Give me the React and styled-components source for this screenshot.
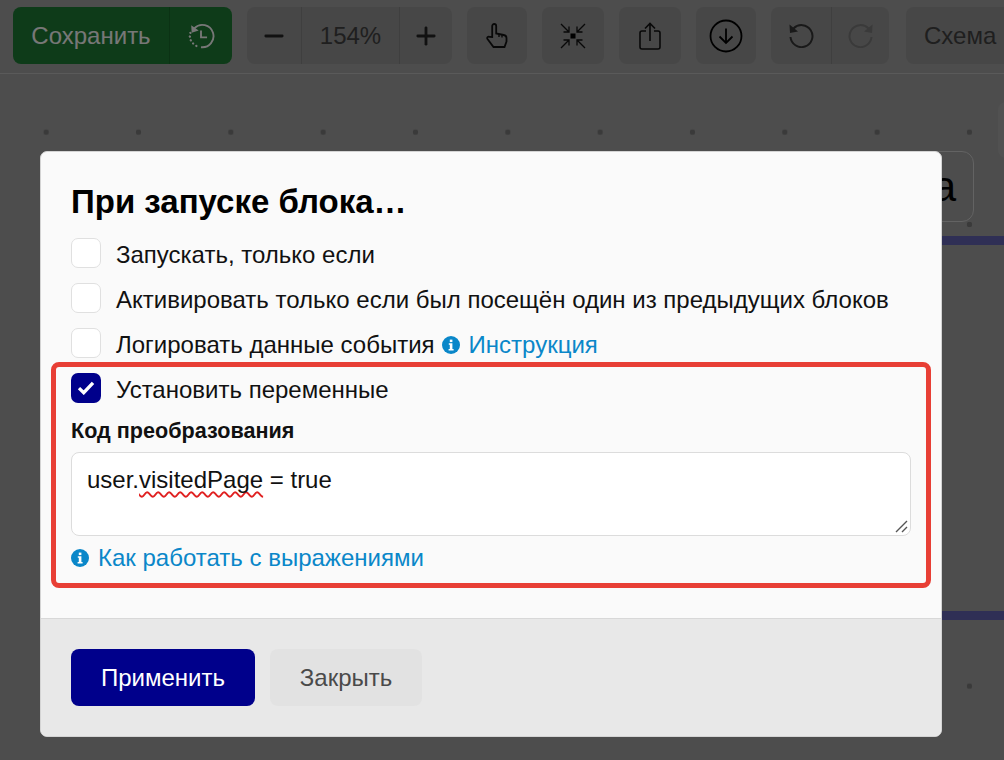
import React from 'react';
import styled, { createGlobalStyle } from 'styled-components';
import { Minus, Plus } from 'lucide-react';

const GlobalStyle = createGlobalStyle`
  html, body {
    margin: 0;
    height: 100%;
    overflow: hidden;
    font-family: "Liberation Sans", Arial, sans-serif;
  }
  * {
    box-sizing: border-box;
  }
`;

const Page = styled.div`
  position: relative;
  display: flex;
  flex-direction: column;
  height: 760px;
  overflow: hidden;
  background: #9a9a9a;
`;

const Toolbar = styled.div`
  display: flex;
  flex: none;
  gap: 15px;
  height: 74px;
  padding: 7px 13px 9px;
  border-bottom: 1px solid #b4b4b4;
`;

const Group = styled.div`
  display: flex;
  flex: none;
  overflow: hidden;
  height: 57px;
  border-radius: 8px;
  background: ${(props) => (props.$save ? '#1c7632' : '#8e8e8e')};
`;

const ToolButton = styled.div`
  display: flex;
  flex: none;
  align-items: center;
  justify-content: center;
  width: ${(props) => props.$width}px;
  font-size: 24px;
  color: ${(props) => (props.$save ? '#efefef' : '#3e3e3e')};
  border-left: ${(props) => (props.$divider ? `1px solid ${props.$save ? '#176429' : '#7e7e7e'}` : 'none')};
`;

const SchemaButton = styled(Group)`
  align-items: center;
  margin-left: 2px;
  padding: 0 18px;
  font-size: 24px;
  color: #3e3e3e;
`;

const Canvas = styled.div`
  position: relative;
  flex: 1;
  background-image: radial-gradient(circle, #747474 2.6px, transparent 3px);
  background-size: 92.33px 92.33px;
  background-position: 0 12px;
`;

const Card = styled.div`
  position: absolute;
  top: 77px;
  right: 30px;
  display: flex;
  align-items: center;
  justify-content: flex-end;
  width: 240px;
  height: 71px;
  padding-right: 17px;
  font-size: 42px;
  color: #000;
  background: #9a9a9a;
  border: 1px solid #c6c6c6;
  border-radius: 12px;
`;

const Block = styled.div`
  position: absolute;
  top: 162px;
  left: 600px;
  right: 0;
  height: 384px;
  background: #9a9a9a;
  border-top: 9px solid #5e5eaa;
  border-bottom: 9px solid #5e5eaa;
`;

const SideTab = styled.div`
  position: absolute;
  top: 28px;
  left: 998px;
  width: 40px;
  height: 56px;
  background: #a2a2a2;
  border-radius: 8px;
`;

const Overlay = styled.div`
  position: absolute;
  inset: 0;
  display: flex;
  align-items: flex-start;
  padding: 151px 62px 0 40px;
  background: rgba(0, 0, 0, 0.5);
`;

const Modal = styled.div`
  width: 902px;
  overflow: hidden;
  background: #fafafa;
  border: 1px solid #d4d4d4;
  border-radius: 7px;
`;

const ModalBody = styled.div`
  display: flex;
  flex-direction: column;
  padding: 31px 30px 30px;
`;

const Title = styled.h2`
  margin: 0 0 17px;
  font-size: 33px;
  line-height: 38px;
  font-weight: 700;
  color: #000;
`;

const Options = styled.div`
  display: flex;
  flex-direction: column;
  gap: 15px;
`;

const Option = styled.div`
  display: flex;
  align-items: center;
  gap: 15px;
  height: 30px;
  font-size: 24px;
  color: #111;
`;

const OptionText = styled.span`
  display: flex;
  align-items: center;
  padding-top: 3px;
`;

const Check = styled.span`
  display: flex;
  flex: none;
  align-items: center;
  justify-content: center;
  width: 30px;
  height: 30px;
  background: ${(props) => (props.$checked ? '#00008b' : '#fff')};
  border: ${(props) => (props.$checked ? 'none' : '1px solid #e0e0e0')};
  border-radius: 7px;
`;

const InlineLink = styled.a`
  display: inline-flex;
  align-items: center;
  gap: 9px;
  margin-left: ${(props) => props.$indent || 0}px;
  font-size: 24px;
  line-height: 24px;
  color: #0a87c9;
`;

const Highlight = styled.div`
  display: flex;
  flex-direction: column;
  margin: 4px -20px 0;
  padding: 6px 15px 13px;
  border: 5px solid #e83f35;
  border-radius: 8px;
`;

const FieldLabel = styled.div`
  margin: 16px 0 9px;
  font-size: 21.6px;
  line-height: 24px;
  font-weight: 700;
  color: #111;
`;

const CodeField = styled.div`
  position: relative;
  height: 84px;
  margin-bottom: 10px;
  padding: 13px 15px;
  font-size: 24px;
  line-height: 28px;
  color: #111;
  background: #fff;
  border: 1px solid #dcdcdc;
  border-radius: 8px;
`;

const Misspelled = styled.span`
  text-decoration: underline wavy #e02020 1.5px;
  text-decoration-skip-ink: none;
  text-underline-offset: 3px;
`;

const Grip = styled.svg`
  position: absolute;
  right: 2px;
  bottom: 2px;
`;

const Footer = styled.div`
  display: flex;
  gap: 15px;
  padding: 30px;
  background: #e8e8e8;
  border-top: 1px solid #d8d8d8;
`;

const Button = styled.div`
  display: flex;
  align-items: center;
  justify-content: center;
  width: ${(props) => props.$width}px;
  height: 57px;
  font-size: 24px;
  color: ${(props) => (props.$primary ? '#fff' : '#4a4a4a')};
  background: ${(props) => (props.$primary ? '#00008b' : '#e2e2e2')};
  border-radius: 8px;
`;

function HistoryIcon() {
  return (
    <svg width="28" height="28" viewBox="0 0 30 30" fill="none" stroke="#efefef" strokeWidth="2">
      <path d="M8 6.5A12 12 0 1 1 15 27" />
      <path d="M3.6 11.6l.1.1M3 15.6l.1.1M4 19.6l.1.1M6.5 23l.1.1M10 25.6l.1.1" strokeWidth="2.4" strokeLinecap="round" />
      <path d="M4.5 3.5L5 11.5L12.5 9Z" fill="#efefef" stroke="none" />
      <path d="M15 9v7.5h6.5" />
    </svg>
  );
}

function HandIcon() {
  return (
    <svg width="22" height="26" viewBox="0 0 22 26" fill="none" stroke="#111" strokeWidth="1.8">
      <path d="M6.2 14V3a2 2 0 0 1 4 0v7.5l7.5 1.5c1.5.3 2.8 1.2 2.8 3v3.5l-2 5.5H7.5L1.5 16c-.9-1.3.6-3 2-2.2Z" />
      <path d="M13 11v3M16 11.5v3" strokeWidth="1.4" />
    </svg>
  );
}

function FitIcon() {
  return (
    <svg width="26" height="26" viewBox="0 0 26 26" fill="none" stroke="#111" strokeWidth="1.3">
      <rect x="10.5" y="10.5" width="5" height="5" fill="#000" stroke="none" />
      <path d="M1 1l8 8M3.5 9H9V3.5" />
      <path d="M25 1l-8 8M22.5 9H17V3.5" />
      <path d="M1 25l8-8M3.5 17H9v5.5" />
      <path d="M25 25l-8-8M22.5 17H17v5.5" />
    </svg>
  );
}

function ShareIcon() {
  return (
    <svg width="22" height="28" viewBox="0 0 22 28" fill="none" stroke="#111" strokeWidth="1.6">
      <path d="M7 9H3a2 2 0 0 0-2 2v14a2 2 0 0 0 2 2h16a2 2 0 0 0 2-2V11a2 2 0 0 0-2-2h-4" />
      <path d="M11 19V1.5M6 6.5l5-5 5 5" />
    </svg>
  );
}

function DownloadIcon() {
  return (
    <svg width="34" height="34" viewBox="0 0 34 34" fill="none" stroke="#000" strokeWidth="1.8">
      <circle cx="17" cy="17" r="15.5" />
      <path d="M17 9.5v14M10.5 17.5l6.5 6.5 6.5-6.5" />
    </svg>
  );
}

const TurnSvg = styled.svg`
  margin-top: -2px;
  transform: ${(props) => (props.$flip ? 'scaleX(-1)' : 'none')};
`;

function TurnIcon({ flip, color }) {
  return (
    <TurnSvg $flip={flip} width="26" height="26" viewBox="0 0 26 26" fill="none" stroke={color} strokeWidth="2">
      <path d="M5.5 6.5A11 11 0 1 1 2.5 15" />
      <path d="M1.5 2.5L2 11L10 9.5Z" fill={color} stroke="none" />
    </TurnSvg>
  );
}

function InfoIcon() {
  return (
    <svg width="18" height="18" viewBox="0 0 18 18">
      <circle cx="9" cy="9" r="9" fill="#0a87c9" />
      <rect x="7.8" y="3.6" width="2.6" height="2.5" fill="#fff" />
      <path d="M6.8 7.3h3.6v5.6h1.2v1.5H6.6v-1.5h1.2V8.8h-1Z" fill="#fff" />
    </svg>
  );
}

function CheckMark() {
  return (
    <svg width="18" height="14" viewBox="0 0 20 16" fill="none" stroke="#fff" strokeWidth="3.8">
      <path d="M2 8.2l5.4 5.2L18 2.2" />
    </svg>
  );
}

export default function App() {
  return (
    <Page>
      <GlobalStyle />
      <Toolbar>
        <Group $save>
          <ToolButton $save $width={156}>Сохранить</ToolButton>
          <ToolButton $save $divider $width={63}><HistoryIcon /></ToolButton>
        </Group>
        <Group>
          <ToolButton $width={54}><Minus size={28} color="#222" strokeWidth={2.4} /></ToolButton>
          <ToolButton $divider $width={98}>154%</ToolButton>
          <ToolButton $divider $width={53}><Plus size={28} color="#222" strokeWidth={2.4} /></ToolButton>
        </Group>
        <Group><ToolButton $width={60}><HandIcon /></ToolButton></Group>
        <Group><ToolButton $width={62}><FitIcon /></ToolButton></Group>
        <Group><ToolButton $width={62}><ShareIcon /></ToolButton></Group>
        <Group><ToolButton $width={60}><DownloadIcon /></ToolButton></Group>
        <Group>
          <ToolButton $width={60}><TurnIcon color="#333" /></ToolButton>
          <ToolButton $divider $width={58}><TurnIcon flip color="#747474" /></ToolButton>
        </Group>
        <SchemaButton>Схема</SchemaButton>
      </Toolbar>
      <Canvas>
        <SideTab />
        <Card>а</Card>
        <Block />
      </Canvas>
      <Overlay>
        <Modal>
          <ModalBody>
            <Title>При запуске блока…</Title>
            <Options>
              <Option><Check /><OptionText>Запускать, только если</OptionText></Option>
              <Option><Check /><OptionText>Активировать только если был посещён один из предыдущих блоков</OptionText></Option>
              <Option>
                <Check />
                <OptionText>
                  Логировать данные события
                  <InlineLink $indent={7}><InfoIcon />Инструкция</InlineLink>
                </OptionText>
              </Option>
            </Options>
            <Highlight>
              <Option><Check $checked><CheckMark /></Check><OptionText>Установить переменные</OptionText></Option>
              <FieldLabel>Код преобразования</FieldLabel>
              <CodeField>
                user.<Misspelled>visitedPage</Misspelled> = true
                <Grip width="14" height="14" viewBox="0 0 14 14" fill="none" stroke="#555" strokeWidth="1.4">
                  <path d="M2 13L13 2M8 13l5-5" />
                </Grip>
              </CodeField>
              <InlineLink><InfoIcon />Как работать с выражениями</InlineLink>
            </Highlight>
          </ModalBody>
          <Footer>
            <Button $primary $width={184}>Применить</Button>
            <Button $width={152}>Закрыть</Button>
          </Footer>
        </Modal>
      </Overlay>
    </Page>
  );
}
